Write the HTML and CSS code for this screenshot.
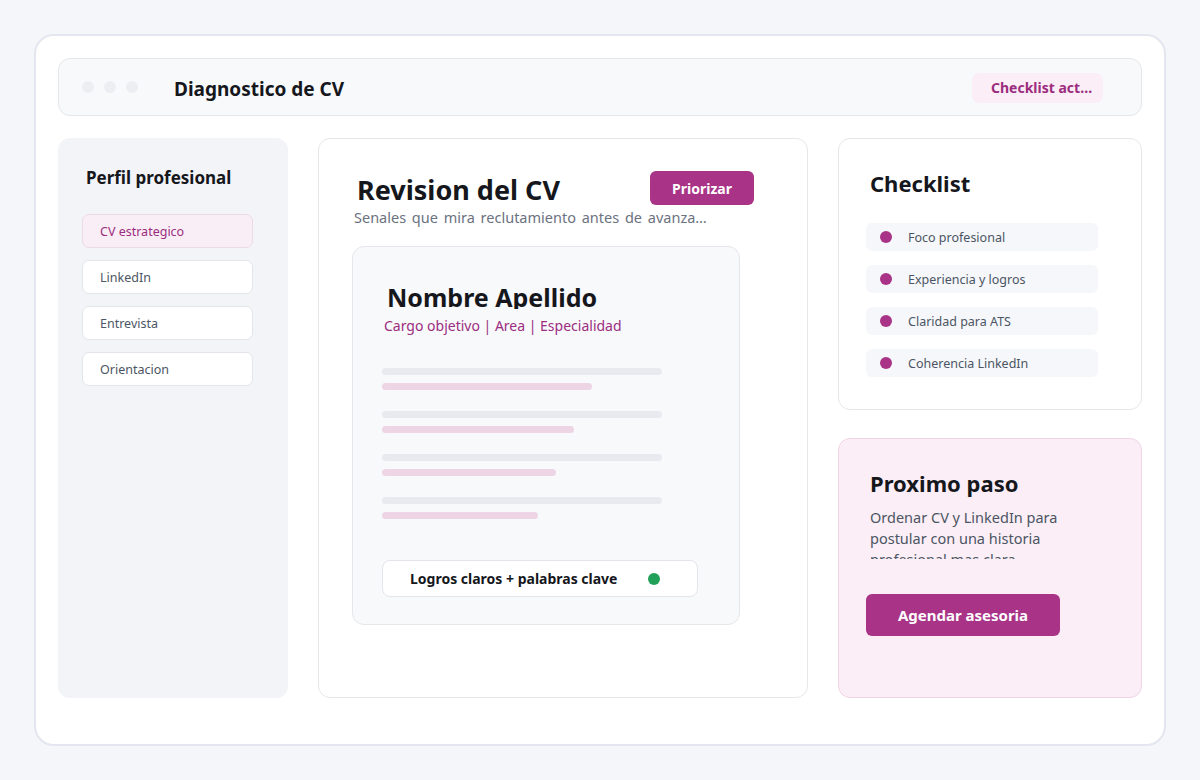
FILE: index.html
```html
<!DOCTYPE html>
<html lang="es">
<head>
    <meta charset="UTF-8">
    <meta name="viewport" content="width=device-width, initial-scale=1.0">
    <title>Diagnostico de CV</title>
    <link rel="stylesheet" href="styles.css">
</head>
<body>
    <div class="frame">
        <header class="topbar">
            <div class="dots"><span></span><span></span><span></span></div>
            <h1>Diagnostico de CV</h1>
            <div class="badge">Checklist activo</div>
        </header>

        <aside class="sidebar">
            <h2>Perfil profesional</h2>
            <nav class="menu">
                <a class="menu-item active">CV estrategico</a>
                <a class="menu-item">LinkedIn</a>
                <a class="menu-item">Entrevista</a>
                <a class="menu-item">Orientacion</a>
            </nav>
        </aside>

        <main class="review">
            <div class="review-head">
                <h2>Revision del CV</h2>
                <button class="btn btn-small">Priorizar</button>
            </div>
            <p class="subtitle">Senales que mira reclutamiento antes de avanzar con una entrevista</p>

            <div class="cv-sheet">
                <h3 class="cv-name">Nombre Apellido</h3>
                <p class="cv-role">Cargo objetivo | Area | Especialidad</p>
                <div class="cv-lines">
                    <div class="line-group"><span class="bar grey"></span><span class="bar pink" style="width: 210px"></span></div>
                    <div class="line-group"><span class="bar grey"></span><span class="bar pink" style="width: 192px"></span></div>
                    <div class="line-group"><span class="bar grey"></span><span class="bar pink" style="width: 174px"></span></div>
                    <div class="line-group"><span class="bar grey"></span><span class="bar pink" style="width: 156px"></span></div>
                </div>
                <div class="cv-note">
                    <span>Logros claros + palabras clave</span>
                    <span class="dot green"></span>
                </div>
            </div>
        </main>

        <div class="right-col">
            <section class="card checklist">
                <h2>Checklist</h2>
                <ul>
                    <li><span class="dot"></span>Foco profesional</li>
                    <li><span class="dot"></span>Experiencia y logros</li>
                    <li><span class="dot"></span>Claridad para ATS</li>
                    <li><span class="dot"></span>Coherencia LinkedIn</li>
                </ul>
            </section>
            <section class="card next-step">
                <h2>Proximo paso</h2>
                <p>Ordenar CV y LinkedIn para postular con una historia profesional mas clara.</p>
                <button class="btn btn-large">Agendar asesoria</button>
            </section>
        </div>
    </div>
</body>
</html>
```

FILE: styles.css
```css
body {
    margin: 0;
    padding: 34px;
    background-color: #f5f6fa;
    font-family: "Noto Sans", "Open Sans", Arial, sans-serif;
    color: #15171c;
}
h1, h2, h3, p {
    margin: 0;
}
.frame {
    height: 712px;
    box-sizing: border-box;
    background-color: #fff;
    border: 2px solid #e3e6ee;
    border-radius: 20px;
    padding: 22px;
    display: grid;
    grid-template-columns: 230px 490px 304px;
    grid-template-rows: 58px 560px;
    column-gap: 30px;
    row-gap: 22px;
}

/* top bar */
.topbar {
    grid-column: 1 / 4;
    display: flex;
    align-items: center;
    background-color: #f8f9fb;
    border: 1px solid #e5e7eb;
    border-radius: 12px;
    padding: 0 38px 0 23px;
}
.dots {
    display: flex;
    gap: 10px;
    width: 92px;
}
.dots span {
    width: 12px;
    height: 12px;
    border-radius: 50%;
    background-color: #eceef2;
}
.topbar h1 {
    font-size: 19px;
    font-weight: 700;
    flex: 1;
    padding-top: 3px;
}
.badge {
    width: 131px;
    height: 30px;
    box-sizing: border-box;
    padding: 5px 10px 0 19px;
    margin-top: 1px;
    background-color: #fbeef6;
    border-radius: 7px;
    color: #9b2d7f;
    font-size: 14px;
    font-weight: 700;
    white-space: nowrap;
    overflow: hidden;
    text-overflow: ellipsis;
}

/* sidebar */
.sidebar {
    background-color: #f3f4f8;
    border-radius: 12px;
    padding: 28px 24px;
}
.sidebar h2 {
    font-size: 17px;
    font-weight: 700;
    margin-left: 4px;
}
.menu {
    display: flex;
    flex-direction: column;
    gap: 12px;
    margin-top: 25px;
    width: 171px;
}
.menu-item {
    height: 34px;
    box-sizing: border-box;
    display: flex;
    align-items: center;
    padding-left: 17px;
    background-color: #fff;
    border: 1px solid #e3e5ea;
    border-radius: 7px;
    font-size: 12.5px;
    color: #4b5563;
}
.menu-item.active {
    background-color: #faeef6;
    border-color: #ecdbe6;
    color: #9b2d7f;
}

/* middle */
.review {
    background-color: #fff;
    border: 1px solid #e5e7eb;
    border-radius: 12px;
    padding: 31px 33px;
}
.review-head {
    display: flex;
    justify-content: space-between;
    align-items: flex-start;
    width: 402px;
}
.review-head h2 {
    font-size: 27px;
    font-weight: 700;
    line-height: 40px;
    margin-left: 5px;
}
.subtitle {
    width: 353px;
    font-size: 14.5px;
    color: #6b7280;
    word-spacing: 2px;
    white-space: nowrap;
    overflow: hidden;
    text-overflow: ellipsis;
    margin-top: -3px;
    margin-left: 2px;
}
.btn {
    border: none;
    background-color: #a83387;
    color: #fff;
    font-family: inherit;
    font-weight: 700;
    cursor: pointer;
    flex-shrink: 0;
}
.btn-small {
    width: 104px;
    height: 34px;
    border-radius: 6px;
    font-size: 14px;
    margin-top: 1px;
}
.btn-large {
    width: 194px;
    height: 42px;
    border-radius: 6px;
    font-size: 15px;
}

.cv-sheet {
    width: 388px;
    height: 379px;
    box-sizing: border-box;
    margin-top: 19px;
    background-color: #f8f9fb;
    border: 1px solid #e5e7eb;
    border-radius: 12px;
    padding: 33px 29px 0;
}
.cv-name {
    font-size: 25px;
    font-weight: 700;
    line-height: 34px;
    height: 29px;
    overflow: hidden;
    margin-left: 5px;
}
.cv-role {
    font-size: 14px;
    color: #9b2d7f;
    margin-top: 7px;
    margin-left: 2px;
}
.cv-lines {
    display: flex;
    flex-direction: column;
    gap: 21px;
    margin-top: 33px;
}
.line-group {
    display: flex;
    flex-direction: column;
    gap: 8px;
}
.bar {
    display: block;
    height: 7px;
    border-radius: 4px;
}
.bar.grey {
    width: 280px;
    background-color: #e9eaf0;
}
.bar.pink {
    background-color: #eed5e6;
}
.cv-note {
    margin-top: 41px;
    width: 316px;
    height: 37px;
    box-sizing: border-box;
    display: flex;
    align-items: center;
    justify-content: space-between;
    padding: 0 37px 0 27px;
    background-color: #fff;
    border: 1px solid #e3e5ea;
    border-radius: 8px;
    font-size: 14px;
    font-weight: 700;
}

.dot {
    width: 12px;
    height: 12px;
    border-radius: 50%;
    background-color: #a83387;
    flex-shrink: 0;
}
.dot.green {
    background-color: #22a05a;
}

/* right column */
.right-col {
    display: flex;
    flex-direction: column;
    gap: 28px;
}
.card {
    border-radius: 12px;
    box-sizing: border-box;
    padding: 29px 27px;
}
.card h2 {
    font-size: 22px;
    font-weight: 700;
    margin-left: 4px;
}
.checklist {
    height: 272px;
    background-color: #fff;
    border: 1px solid #e5e7eb;
}
.checklist ul {
    list-style: none;
    margin: 25px 0 0;
    padding: 0;
    display: flex;
    flex-direction: column;
    gap: 14px;
}
.checklist li {
    width: 232px;
    height: 28px;
    box-sizing: border-box;
    display: flex;
    align-items: center;
    gap: 16px;
    padding-left: 14px;
    background-color: #f6f7fb;
    border-radius: 6px;
    font-size: 12.5px;
    color: #4b5563;
}
.next-step {
    height: 260px;
    background-color: #fbeef6;
    border: 1px solid #f0d4e6;
}
.next-step p {
    width: 226px;
    margin: 9px 0 0 4px;
    font-size: 14.5px;
    line-height: 21px;
    color: #4b5563;
    height: 52px;
    overflow: hidden;
}
.next-step .btn-large {
    margin-top: 35px;
}
```
